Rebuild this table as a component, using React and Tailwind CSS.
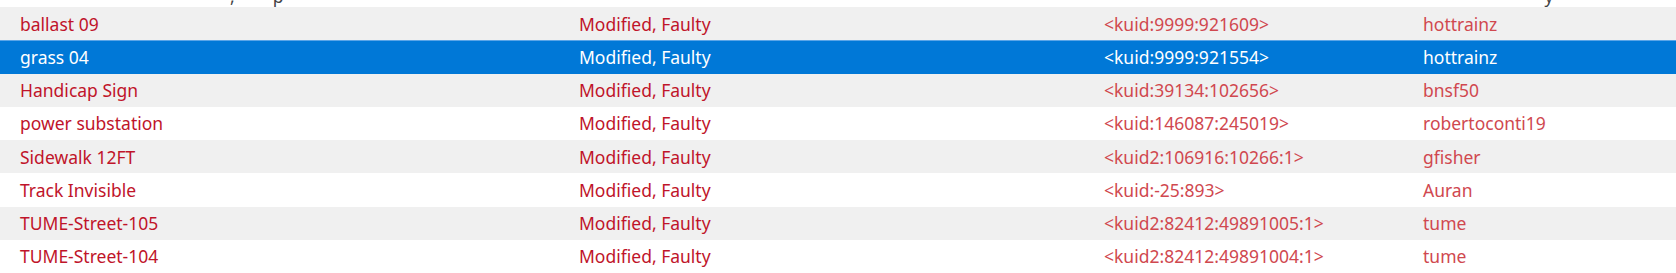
const rows = [
  { name: 'ballast 09', status: 'Modified, Faulty', kuid: '<kuid:9999:921609>', author: 'hottrainz' },
  { name: 'grass 04', status: 'Modified, Faulty', kuid: '<kuid:9999:921554>', author: 'hottrainz', selected: true },
  { name: 'Handicap Sign', status: 'Modified, Faulty', kuid: '<kuid:39134:102656>', author: 'bnsf50' },
  { name: 'power substation', status: 'Modified, Faulty', kuid: '<kuid:146087:245019>', author: 'robertoconti19' },
  { name: 'Sidewalk 12FT', status: 'Modified, Faulty', kuid: '<kuid2:106916:10266:1>', author: 'gfisher' },
  { name: 'Track Invisible', status: 'Modified, Faulty', kuid: '<kuid:-25:893>', author: 'Auran' },
  { name: 'TUME-Street-105', status: 'Modified, Faulty', kuid: '<kuid2:82412:49891005:1>', author: 'tume' },
  { name: 'TUME-Street-104', status: 'Modified, Faulty', kuid: '<kuid2:82412:49891004:1>', author: 'tume' },
];

export default function App() {
  return (
    <div className="w-[1676px] h-[273px] overflow-hidden bg-white font-['Noto_Sans',sans-serif] text-[17.5px]">
      {/* tail of the line above, only descenders visible */}
      <div className="h-[7px] overflow-hidden text-[#444]">
        <div className="flex leading-[20px] -mt-[14px]">
          <span className="ml-[230px]">,</span>
          <span className="ml-[38px]">p</span>
          <span className="ml-[1261px]">y</span>
        </div>
      </div>

      {rows.map((r, i) => {
        let rowCls = i % 2 === 0 ? 'bg-[#f0f0f0]' : 'bg-white';
        if (r.selected) rowCls = 'bg-[#0078d7] border-t border-[#5aa5e8] text-white';
        return (
          <div key={r.name} className={`flex items-center h-[33.25px] ${rowCls}`}>
            <div className={`w-[559px] shrink-0 pl-[20px] ${r.selected ? '' : 'text-[#c0142a]'}`}>{r.name}</div>
            <div className={`w-[545px] shrink-0 pl-[20px] ${r.selected ? '' : 'text-[#c0142a]'}`}>{r.status}</div>
            <div className={`w-[319px] shrink-0 ${r.selected ? '' : 'text-[#d0484f]'}`}>{r.kuid}</div>
            <div className={`flex-1 ${r.selected ? '' : 'text-[#d0484f]'}`}>{r.author}</div>
          </div>
        );
      })}
    </div>
  );
}
